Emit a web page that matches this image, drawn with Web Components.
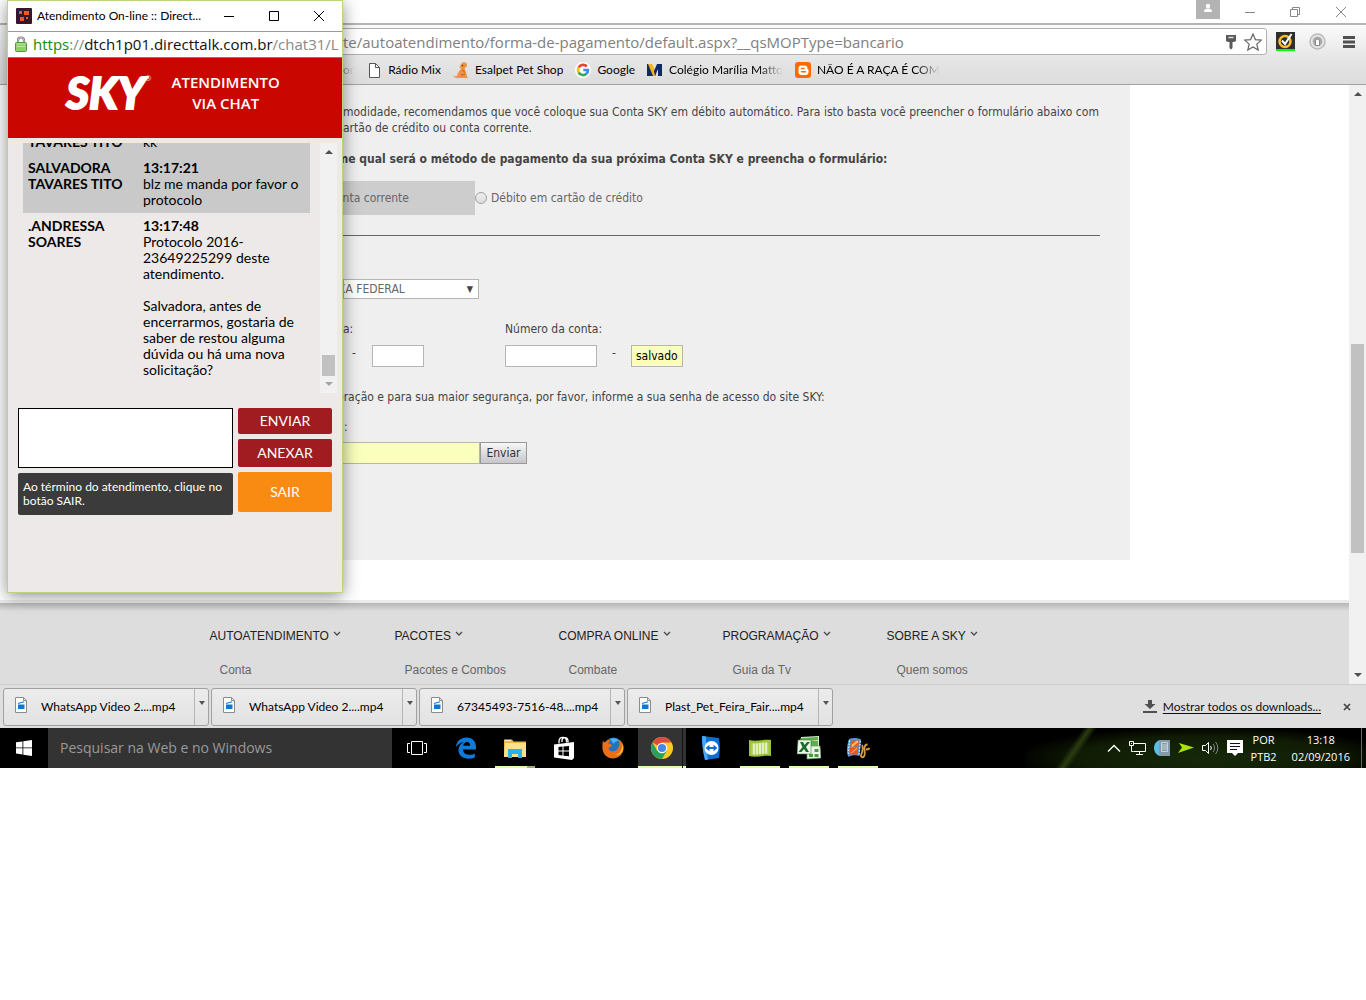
<!DOCTYPE html>
<html lang="pt-BR">
<head>
<meta charset="utf-8">
<title>Formas de pagamento</title>
<style>
    body {
        margin: 0;
        background: #fff;
        color: #000;
        font: 12px/16px Lato, sans-serif;
    }
</style>
</head>
<body>
<desktop-screen>
    <browser-window>
        <browser-toolbar slot="toolbar" url="te/autoatendimento/forma-de-pagamento/default.aspx?__qsMOPType=bancario"></browser-toolbar>
        <bookmark-bar slot="bookmarks">
            <bookmark-item fade>or</bookmark-item>
            <bookmark-item icon="page">Rádio Mix</bookmark-item>
            <bookmark-item icon="dog">Esalpet Pet Shop</bookmark-item>
            <bookmark-item icon="google">Google</bookmark-item>
            <bookmark-item icon="colegio" fade>Colégio Marília Matto</bookmark-item>
            <bookmark-item icon="blogger" fade>NÃO É A RAÇA É COM</bookmark-item>
        </bookmark-bar>
        <payment-form></payment-form>
        <site-footer>
            <footer-column heading="AUTOATENDIMENTO">Conta</footer-column>
            <footer-column heading="PACOTES">Pacotes e Combos</footer-column>
            <footer-column heading="COMPRA ONLINE">Combate</footer-column>
            <footer-column heading="PROGRAMAÇÃO">Guia da Tv</footer-column>
            <footer-column heading="SOBRE A SKY">Quem somos</footer-column>
        </site-footer>
        <download-shelf slot="shelf">
            <download-item>WhatsApp Video 2....mp4</download-item>
            <download-item>WhatsApp Video 2....mp4</download-item>
            <download-item>67345493-7516-48....mp4</download-item>
            <download-item>Plast_Pet_Feira_Fair....mp4</download-item>
        </download-shelf>
    </browser-window>
    <task-bar slot="taskbar"></task-bar>
    <chat-window slot="popup">
        <chat-message author="TAVARES TITO" class="client">kk</chat-message>
        <chat-message author="SALVADORA TAVARES TITO" time="13:17:21" class="client">blz me manda por favor o protocolo</chat-message>
        <chat-message author=".ANDRESSA SOARES" time="13:17:48">Protocolo 2016-23649225299 deste atendimento.<br><br>Salvadora, antes de encerrarmos, gostaria de saber de restou alguma dúvida ou há uma nova solicitação?</chat-message>
    </chat-window>
</desktop-screen>

<script>
// every icon is drawn here, name -> [viewBox, markup]
const icons = {
    page: ['0 0 16 16', '<path d="M3.500 1.500h6l4 4v10h-10z" fill="#fff" stroke="#555"/><path d="M9.500 1.500v4h4" fill="none" stroke="#555"/>'],
    dog: ['0 0 16 16', '<path d="M8.500 1.500c1.500-1.800 5-1.500 5.500 1 .3 2-1 3.300-2.500 3.500l1 3c1 2 .8 3.500 1.500 5.500l1 1.500H4.500c-2 0-3.500-.8-4.500-2.500 1.500.8 3 1 4.200.3C4.500 11 6 8.500 8.500 7 6.500 6.500 6.500 5 7 4z" fill="#ef9243"/><path d="M9 7.500l3 3M8 13l4-.5" stroke="#b65d1c" fill="none"/><circle cx="9.500" cy="3.500" r=".8" fill="#5b2d10"/>'],
    google: ['0 0 16 16', '<circle cx="8" cy="8" r="8" fill="#fff"/><g fill="none" stroke-width="2.600"><path d="M11.800 4.500A5 5 0 0 0 3.700 5.500" stroke="#ea4335"/><path d="M3.700 5.500a5 5 0 0 0 0 5" stroke="#fbbc05"/><path d="M3.700 10.500a5 5 0 0 0 7.700 1.300" stroke="#34a853"/><path d="M11.400 11.800A5 5 0 0 0 13 8H8.300" stroke="#4285f4"/></g>'],
    colegio: ['0 0 16 16', '<path d="M0 2h4l4 12H0z" fill="#0c2a66"/><path d="M1 2h4l4 8v4H6z" fill="#f5b324"/><path d="M10 2h5v12h-4V7L8 14 7 9z" fill="#0c2a66"/>'],
    blogger: ['0 0 16 16', '<rect width="16" height="16" rx="3" fill="#ff6a00"/><path d="M6.500 3.500h3a3 3 0 0 1 3 3c0 .8.200 1 1 1v2.500a3 3 0 0 1-3 3h-4a3 3 0 0 1-3-3v-3.500a3 3 0 0 1 3-3z" fill="#fff"/><path d="M6.500 6.500h2.500M6.500 9.800h4" stroke="#ff6a00" stroke-width="1.500" stroke-linecap="round"/>'],
    key: ['0 0 16 16', '<path d="M3 1h10v6l-2 1H9.500v6L8 15.500 6.500 14V8H5L3 7z" fill="#5a5a5a"/><path d="M5.500 3.500h5" stroke="#ddd" stroke-width="1.500"/>'],
    star: ['0 0 18 18', '<path d="M9 1l2.400 5.600 6 .5-4.600 4 1.400 5.900L9 13.900 3.800 17l1.400-5.900-4.600-4 6-.5z" fill="#fff" stroke="#666" stroke-width="1.200"/>'],
    norton: ['0 0 19 19', '<path fill="#2e2e2e" d="M0 0h19v19H0z"/><path fill="#0f0" d="M0 17h19v2H0z"/><circle cx="9" cy="9.500" r="5.500" fill="none" stroke="#fdbb30" stroke-width="2.500"/><path d="M6 8.500l3 3.500 6.500-10" fill="none" stroke="#fff" stroke-width="2"/>'],
    podcast: ['0 0 17 17', '<circle cx="8.500" cy="8.500" r="7.500" fill="#e5e5e5" stroke="#bbb" stroke-width="1.500"/><circle cx="8.500" cy="8.500" r="4.800" fill="#aaa"/><path d="M6.500 12.500V8a2 2 0 0 1 4 0v4.500z" fill="#fff" stroke="#888"/>'],
    menu: ['0 0 14 14', '<path d="M1 2.500h12M1 7h12M1 11.500h12" stroke="#505050" stroke-width="3"/>'],
    user: ['0 0 24 19', '<path fill="#b3b3b3" d="M0 0h24v19H0z"/><circle cx="12" cy="6" r="2.200" fill="#fff"/><path d="M8 12c0-2.500 1.500-3.500 4-3.500s4 1 4 3.500z" fill="#fff"/>'],
    minimize: ['0 0 12 12', '<path d="M1 6.500h10" stroke="currentColor"/>'],
    maximize: ['0 0 12 12', '<path d="M1.500 1.500h9v9h-9z" fill="none" stroke="currentColor"/>'],
    restore: ['0 0 12 12', '<path d="M1.500 3.500h7v7h-7zM3.500 3.500v-2h7v7h-2" fill="none" stroke="currentColor"/>'],
    close: ['0 0 12 12', '<path d="M1 1l10 10M11 1L1 11" stroke="currentColor" fill="none"/>'],
    cross: ['0 0 8 8', '<path d="M1 1l6 6M7 1L1 7" stroke="#444" stroke-width="1.700"/>'],
    chevron: ['0 0 8 6', '<path d="M1 1l3 3 3-3" fill="none" stroke="#4a4a4a" stroke-width="1.300"/>'],
    caret: ['0 0 8 4', '<path d="M1 0h6L4 4z" fill="#555"/>'],
    up: ['0 0 8 4', '<path d="M0 4h8L4 0z" fill="currentColor"/>'],
    down: ['0 0 8 4', '<path d="M0 0h8L4 4z" fill="currentColor"/>'],
    lock: ['0 0 12 16', '<path d="M3 7V4.500a3 3 0 0 1 6 0V7" fill="none" stroke="#777" stroke-width="2.200"/><path d="M3 7V4.500a3 3 0 0 1 6 0V7" fill="none" stroke="#ddd" stroke-width=".8"/><rect x=".5" y="6.500" width="11" height="9" rx="1" fill="#8ed16b" stroke="#57983c"/><path d="M1.500 8h9M1.500 10.500h9" stroke="#b5e69b"/>'],
    talk: ['0 0 16 16', '<rect width="16" height="16" rx="1" fill="#35182a"/><path d="M3 3h3v3H3zM8 3h5v4H8zM4 9h4v4H4zM10 9h2v2h-2z" fill="#ee5a24"/>'],
    video: ['0 0 12 16', '<path d="M.5.5h8l3 3v12H.5z" fill="#fff" stroke="#8c8c8c"/><path d="M8.500.5v3h3" fill="none" stroke="#8c8c8c"/><path d="M3 7.500h6.500V12H3zM2.800 6l6-1.700.3 1-6 1.700z" fill="#0a78d7"/>'],
    download: ['0 0 14 13', '<path d="M5 0h4v4h3.500L7 9 1.500 4H5z" fill="#505050"/><path d="M0 11h14v2H0z" fill="#505050"/>'],
    windows: ['0 0 16 16', '<path d="M0 2.300l6.500-.9v6.100H0zM7.300 1.300L16 0v7.500H7.300zM0 8.300h6.500v6.200L0 13.600zM7.300 8.300H16V16l-8.700-1.300z" fill="#fff"/>'],
    taskview: ['0 0 20 14', '<path d="M4.500.5h11v13h-11zM3 2.500H.5v9H3M17 2.500h2.500v9H17" fill="none" stroke="#fff"/>'],
    edge: ['0 0 22 22', '<path d="M1 10C1.500 4 6 .5 11.500.5c6 0 9.500 4 9.500 9.500v2.500H8c.2 4 3.500 5.300 6.800 5.300 2 0 3.800-.6 5-1.300V20.500c-1.800.8-3.600 1.200-5.800 1.200C8 21.700 3.500 18.500 3.500 13c0-3.500 2-6.500 5.500-8C6 5.300 3 7.300 1 10zm7.200-1.200h7c0-2-1-3.800-3.300-3.800C9.800 5 8.500 6.800 8.200 8.800z" fill="#0c7bd9"/>'],
    folder: ['0 0 22 20', '<path d="M0 1.500h8l1.500 2H22V19H0z" fill="#e9b544"/><path d="M1 5h21v14H0z" fill="#ffe08a"/><path d="M1 2.500h6" stroke="#fff3c2" stroke-width="1.200"/><path d="M4 20v-9h14v9h-4v-4H8v4z" fill="#29b3ea"/>'],
    store: ['0 0 22 24', '<path d="M6 7.500V5c.5-4.500 7-5 7.500 0v1.500M9 6V4c1-3.500 5.500-3 6 .5v2" fill="none" stroke="#fff" stroke-width="1.300"/><path d="M1 8.500L21 6v16L19 24 1 21.500z" fill="#fff"/><path d="M5.500 11l4-.4v4h-4zM10.500 10.500l5.500-.6v4.700h-5.500zM5.500 15.500h4v4l-4-.4zM10.500 15.500H16v4.700l-5.500-.5z" fill="#000"/>'],
    firefox: ['0 0 22 22', '<circle cx="11.500" cy="10" r="9.500" fill="#2274bd"/><path d="M8 2c4-2 8 0 9 2-3-.5-5 1-5 3" fill="#58aee6"/><path d="M1 4l2 1.500C4.500 3.500 6 3 8 3L6.500 6.500 10 8c-.5 2-3 2-3.500 3.500 1 3 5 4 8 1.500 2.500-2 3.500-5 2.500-8.500L16 3c4 1 6 4 5.500 9-.8 6-5.500 9.500-10.500 9.500-6 0-10-4.500-10.500-9.500C.3 9 .3 6 1 4z" fill="#e8701a"/><path d="M20.500 7c.3 6-3 10-7.500 11 3 .5 6-1 7.500-4 1-2.500 1-5 0-7z" fill="#ffc83d"/>'],
    chrome: ['0 0 22 22', '<circle cx="11" cy="11" r="11" fill="#fbc926"/><path d="M11 11L1.500 5.500A11 11 0 0 1 20.500 5.500H11z" fill="#dd4b3e"/><path d="M1.500 5.500A11 11 0 0 0 11 22l4.800-8.300L11 11 6.200 13.700z" fill="#2aa15b"/><circle cx="11" cy="11" r="5.200" fill="#fff"/><circle cx="11" cy="11" r="4.100" fill="#4a86e8"/>'],
    teamviewer: ['0 0 20 24', '<path d="M1 0l17 2c1 7 1 14 0 20L4 24C2 16 1 8 1 0z" fill="#0d6ed6"/><path d="M1 0l4 .5C5 9 6 17 7 23.500L4 24C2 16 1 8 1 0z" fill="#4fa6f2"/><circle cx="10.500" cy="12" r="7" fill="#fff"/><path d="M4.500 12l4-3.200V11h4V8.800l4 3.200-4 3.200V13h-4v2.200z" fill="#0d6ed6"/>'],
    barcode: ['0 0 22 20', '<path d="M0 2c7 2 15-1 22 0v16c-7-1-15 2-22 0z" fill="#9cc33b"/><path d="M2.500 5c6 1 11-1 17-.5v11.500c-6-.5-11 1.500-17 .5z" fill="#b9d66c"/><path d="M5 5.500v11M8 5.500v11M11 5v11M14 4.700v11M17 4.500v11" stroke="#f2f8dc" stroke-width="1.500"/>'],
    excel: ['0 0 24 24', '<path d="M4 1l18-1v14H2z" fill="#d9efd0"/><path d="M4 2l17-1v3L3 6zM14 5h7v8h-7z" fill="#5fae4e"/><path d="M10 10h13l1 12-14 1z" fill="#edf6ea" stroke="#6b9a62" stroke-width=".7"/><path d="M12 18h4v3h-4zM17.500 18h4v3h-4zM17.500 13h4v3h-4z" fill="#4d9a43"/><path d="M1 4h13v14H0z" fill="#eef7ec" stroke="#388037" stroke-width=".6"/><path d="M3 6h3l1.600 3L10 6h3L9 11l3 5H9l-2-3-2.500 3h-3L5.500 11z" fill="#1e6b27"/>'],
    film: ['0 0 24 22', '<path d="M3 2c4-1.500 9-1 12 .5l-1.500 16.500c-3-1-8-1-11 1C0 14 1 8 3 2z" fill="#4a9bd8"/><path d="M5.500 3.500h7.500l-.6 6H4zM3.700 11h8.500l-.6 6.500H4.200z" fill="#e8581c"/><path d="M6 8l5-4 1 1-6 4.500zM5 16l6-4.500" stroke="#ffc27a" fill="#ffa04d"/><path d="M3.500 3.500L2 18.500M14.300 4L13 18" stroke="#e3f1fb" stroke-width="1.300" stroke-dasharray="1.500 1.500"/><path d="M21.500 7.500c-2 0-3 1.500-3 4 0 4 1 6-.5 8-1.500 1.500-3.500.5-3-1.500M16 8c1.500 3 0 8-1 10.500M20 12.500c2 0 3-.5 3.500-1.500" fill="none" stroke="#d99a45" stroke-width="1.800"/>'],
    trayup: ['0 0 14 8', '<path d="M1 7.500l6-6 6 6" fill="none" stroke="#fff" stroke-width="1.400"/>'],
    monitor: ['0 0 17 15', '<path d="M4.500 2.500h12v8h-12M10.500 10.500v3M7 13.500h7M.5.500h4v4h-4zM2.500 4.500v6h2" fill="none" stroke="#fff"/><path d="M2 2h1v1H2z" fill="#fff"/>'],
    server: ['0 0 16 16', '<path d="M6 0v16C-2 14-2 2 6 0z" fill="#57bfe8"/><path d="M5 0h11v16H5z" fill="#8699a6"/><path d="M7.500 2.500h6v9h-6zM8 5h5M8 7h5M8 9h5" fill="none" stroke="#c7d3da"/>'],
    arrow: ['0 0 16 10', '<path d="M1 0l15 4.500L0 10l4-5.500z" fill="#a6e30a"/>'],
    speaker: ['0 0 17 14', '<path d="M.5 4.500h3l3-3v11l-3-3h-3z" fill="none" stroke="#fff"/><path d="M8.500 5a3 3 0 0 1 0 4" fill="none" stroke="#fff"/><path d="M11 3a6 6 0 0 1 0 8M13.500 1a9 9 0 0 1 0 12" fill="none" stroke="#888"/>'],
    note: ['0 0 16 16', '<path d="M0 0h16v13h-5l-3 3-3-3H0z" fill="#fff"/><path d="M3 3.500h10M3 6.500h10M3 9.500h7" stroke="#10180a"/>']
};

class UiIcon extends HTMLElement {
    constructor() {
        super();
        this.attachShadow({ mode: "open" });
    }

    connectedCallback() {
        const [box, markup] = icons[this.getAttribute("name")];
        const [, , w, h] = box.split(" ");
        this.shadowRoot.innerHTML = /*html*/`
            <style>
                :host { display: inline-flex; flex: none; }
                svg { display: block; }
            </style>
            <svg width="${w}" height="${h}" viewBox="${box}" aria-hidden="true">${markup}</svg>
        `;
    }
}
customElements.define("ui-icon", UiIcon);

// small helper: a custom element that only needs a fixed template
function define(name, html) {
    const $template = document.createElement("template");
    $template.innerHTML = html;
    customElements.define(name, class extends HTMLElement {
        constructor() {
            super();
            this.attachShadow({ mode: "open" });
            this.shadowRoot.appendChild($template.content.cloneNode(true));
        }
        connectedCallback() {
            // [data-attr] nodes show the host's attribute of that name
            this.shadowRoot.querySelectorAll("[data-attr]").forEach(node => {
                const value = this.getAttribute(node.dataset.attr);
                if (value === null) node.remove();
                else node.textContent = value;
            });
        }
    });
}

define("desktop-screen", /*html*/`
    <style>
        :host { display: block; position: relative; }
    </style>
    <slot></slot>
    <slot name="taskbar"></slot>
    <slot name="popup"></slot>
`);

define("scroll-rail", /*html*/`
    <style>
        :host {
            display: flex;
            flex-direction: column;
            align-items: center;
            justify-content: space-between;
            box-sizing: border-box;
            width: 17px;
            padding: 7px 0;
            background: #f1f1f1;
            color: #505050;
        }
        .track {
            flex: 1;
            display: flex;
            flex-direction: column;
            width: 13px;
            margin: 6px 0;
        }
        .track::before { content: ""; flex: var(--before, 1); }
        .track::after { content: ""; flex: var(--after, 1); }
        .thumb { flex: var(--thumb, 1); background: #c1c1c1; }
        .end { color: var(--end, #505050); }
    </style>
    <ui-icon name="up"></ui-icon>
    <div class="track"><div class="thumb"></div></div>
    <ui-icon class="end" name="down"></ui-icon>
`);

define("browser-window", /*html*/`
    <style>
        :host { display: block; background: #fff; }
        .viewport { display: flex; border-top: 1px solid #a3a3a3; }
        .page { flex: 1; min-width: 0; overflow: hidden; }
        scroll-rail { --before: 241; --thumb: 208; --after: 114; }
    </style>
    <slot name="toolbar"></slot>
    <slot name="bookmarks"></slot>
    <div class="viewport">
        <div class="page"><slot></slot></div>
        <scroll-rail></scroll-rail>
    </div>
    <slot name="shelf"></slot>
`);

define("browser-toolbar", /*html*/`
    <style>
        :host { display: block; }
        .caption {
            display: flex;
            justify-content: flex-end;
            align-items: flex-start;
            height: 23px;
            padding-right: 19px;
            color: #888;
        }
        .caption button { height: 23px; padding: 0; border: 0; background: none; color: inherit; }
        .caption button:first-child { height: 19px; margin-right: 24px; }
        .caption button:not(:first-child) { width: 12px; padding-top: 4px; }
        .caption .gap { margin: 0 34px 0 33px; }
        .bar {
            display: flex;
            align-items: center;
            height: 27px;
            padding: 3px 10px 3px 110px;
            border-top: 2px solid #b5b5b5;
            background: linear-gradient(#fbfbfb, #e6e6e6);
        }
        .omnibox {
            flex: 1;
            display: flex;
            align-items: center;
            box-sizing: border-box;
            height: 27px;
            padding: 0 4px 0 232px;
            border: 1px solid #b0b0b0;
            border-radius: 3px;
            background: #fff;
        }
        input {
            flex: 1;
            min-width: 0;
            padding: 0;
            border: 0;
            outline: none;
            background: none;
            color: #808080;
            font: 15px/20px "Open Sans", sans-serif;
        }
        .omnibox button, .ext button { display: flex; padding: 0; border: 0; background: none; }
        .omnibox button { margin-left: 5px; }
        .ext { display: flex; align-items: center; gap: 14px; margin-left: 9px; }
        .ext button:last-child { margin-left: 2px; }
    </style>
    <div class="caption">
        <button aria-label="Perfil"><ui-icon name="user"></ui-icon></button>
        <button aria-label="Minimizar"><ui-icon name="minimize"></ui-icon></button>
        <button class="gap" aria-label="Restaurar"><ui-icon name="restore"></ui-icon></button>
        <button aria-label="Fechar"><ui-icon name="close"></ui-icon></button>
    </div>
    <div class="bar">
        <div class="omnibox">
            <input type="text" aria-label="Endereço">
            <button aria-label="Senhas"><ui-icon name="key"></ui-icon></button>
            <button aria-label="Favoritos"><ui-icon name="star"></ui-icon></button>
        </div>
        <div class="ext">
            <button aria-label="Norton"><ui-icon name="norton"></ui-icon></button>
            <button aria-label="Podcast"><ui-icon name="podcast"></ui-icon></button>
            <button aria-label="Menu"><ui-icon name="menu"></ui-icon></button>
        </div>
    </div>
`);
document.querySelectorAll("browser-toolbar").forEach($bar => {
    $bar.shadowRoot.querySelector("input").value = $bar.getAttribute("url");
});

define("bookmark-bar", /*html*/`
    <style>
        :host {
            display: flex;
            align-items: center;
            gap: 12px;
            height: 24px;
            padding: 0 0 2px 343px;
            background: linear-gradient(#e6e6e6, #dcdcdc);
        }
    </style>
    <slot></slot>
`);

define("bookmark-item", /*html*/`
    <style>
        :host { display: block; overflow: hidden; }
        :host([fade]) { mask: linear-gradient(to left, transparent, #000 24px); }
        a { display: flex; align-items: center; gap: 6px; color: #000; text-decoration: none; white-space: nowrap; }
    </style>
    <a href="#"><slot></slot></a>
`);
document.querySelectorAll("bookmark-item[icon]").forEach($item => {
    const $icon = document.createElement("ui-icon");
    $icon.setAttribute("name", $item.getAttribute("icon"));
    $item.shadowRoot.querySelector("a").prepend($icon);
});

define("payment-form", /*html*/`
    <style>
        :host { display: block; padding-bottom: 40px; background: #fff; }
        form {
            box-sizing: border-box;
            max-width: 911px;
            margin: 0 auto;
            padding: 19px 30px 96px 124px;
            background: #efefef;
            color: #444;
            font: 12px/16px "DejaVu Sans Condensed", Tahoma, sans-serif;
        }
        p { margin: 0 0 14px; white-space: nowrap; }
        .lead { margin-bottom: 15px; }
        /* these lines begin a little way under the chat window */
        .under { text-indent: -6px; }
        .method { display: flex; align-items: center; color: #666; }
        .method label { display: flex; align-items: center; gap: 4px; }
        .method .on {
            justify-content: flex-end;
            box-sizing: border-box;
            width: 215px;
            height: 34px;
            margin-left: -83px;
            padding-right: 66px;
            background: #cdcdcd;
        }
        input[type=radio] {
            appearance: none;
            width: 12px;
            height: 12px;
            margin: 0;
            border: 1px solid #a0a0a0;
            border-radius: 50%;
            background: linear-gradient(#eee, #ddd);
        }
        hr { margin: 20px 0 43px -94px; border: 0; border-top: 1px solid #666; }
        select, .text {
            box-sizing: border-box;
            margin: 0;
            border: 1px solid #b5b5b5;
            border-radius: 0;
            background: #fff;
            color: #666;
            font: inherit;
        }
        .bank { display: inline-grid; align-items: center; margin-bottom: 22px; }
        .bank > * { grid-area: 1 / 1; }
        select { width: 136px; height: 20px; padding: 0; appearance: none; }
        .bank span { justify-self: end; margin-right: 6px; font-size: 9px; text-indent: 0; pointer-events: none; }
        .account { display: flex; margin-bottom: 22px; }
        .account label { display: block; margin-bottom: 8px; }
        .account .first { width: 162px; }
        .pair { display: flex; }
        .pair span { margin: 0 15px; }
        .text { height: 22px; padding: 0 4px; }
        .digit { width: 52px; }
        .number { width: 92px; }
        .filled { background: #faffbd; color: #000; }
        .pair .first-dash { margin: 0 16px 0 9px; }
        .secret { display: block; margin: 0 0 7px 1px; }
        .send { display: flex; margin-left: -102px; }
        .password { width: 239px; }
        .send button {
            box-sizing: border-box;
            width: 47px;
            height: 22px;
            padding: 0;
            border: 1px solid #999;
            background: linear-gradient(#f7f7f7, #c6c6cb);
            color: #333;
            font: inherit;
        }
    </style>
    <form>
        <p class="lead">modidade, recomendamos que você coloque sua Conta SKY em débito automático. Para isto basta você preencher o formulário abaixo com<br>artão de crédito ou conta corrente.</p>
        <p class="under"><b>me qual será o método de pagamento da sua próxima Conta SKY e preencha o formulário:</b></p>
        <div class="method">
            <label class="on"><input type="radio" name="method">nta corrente</label>
            <label><input type="radio" name="method">Débito em cartão de crédito</label>
        </div>
        <hr>
        <div class="bank">
            <select class="under" aria-label="Banco"><option>XA FEDERAL</option></select>
            <span>▼</span>
        </div>
        <div class="account">
            <div class="first">
                <label for="agency">a:</label>
                <div class="pair">
                    <span class="first-dash">-</span>
                    <input class="text digit" id="agency" type="text">
                </div>
            </div>
            <div>
                <label for="number">Número da conta:</label>
                <div class="pair">
                    <input class="text number" id="number" type="text">
                    <span>-</span>
                    <input class="text digit filled" type="text" value="salvado" aria-label="Dígito da conta">
                </div>
            </div>
        </div>
        <p class="under">eração e para sua maior segurança, por favor, informe a sua senha de acesso do site SKY:</p>
        <label class="secret" for="password">:</label>
        <div class="send">
            <input class="text filled password" id="password" type="password">
            <button type="button">Enviar</button>
        </div>
    </form>
`);

define("site-footer", /*html*/`
    <style>
        :host {
            display: block;
            height: 81px;
            border-top: 3px solid #ebebeb;
            background: linear-gradient(#b5b5b5, #ddd 8px);
        }
        nav {
            display: grid;
            grid-template-columns: 185px repeat(4, 164px);
            max-width: 930px;
            margin: 0 auto;
            padding-top: 25px;
        }
    </style>
    <nav><slot></slot></nav>
`);

define("footer-column", /*html*/`
    <style>
        :host { display: block; font: 12px/16px "Liberation Sans", Arial, sans-serif; white-space: nowrap; }
        a { display: block; text-decoration: none; }
        .head { display: flex; align-items: center; gap: 4px; margin-bottom: 18px; color: #222; }
        .head ui-icon { margin-bottom: 4px; }
        .sub { padding-left: 10px; color: #666; }
    </style>
    <a class="head" href="#"><span data-attr="heading"></span><ui-icon name="chevron"></ui-icon></a>
    <a class="sub" href="#"><slot></slot></a>
`);

define("download-shelf", /*html*/`
    <style>
        :host {
            display: flex;
            align-items: center;
            gap: 2px;
            box-sizing: border-box;
            height: 44px;
            padding: 0 15px 0 3px;
            border-top: 1px solid #ccc;
            background: #dfdfdf;
        }
        .all { display: flex; align-items: center; gap: 6px; margin-left: auto; color: #111; text-underline-offset: 2px; }
        button { display: flex; margin-left: 20px; padding: 0; border: 0; background: none; }
    </style>
    <slot></slot>
    <a class="all" href="#"><ui-icon name="download"></ui-icon>Mostrar todos os downloads...</a>
    <button aria-label="Fechar"><ui-icon name="cross"></ui-icon></button>
`);

define("download-item", /*html*/`
    <style>
        :host {
            display: flex;
            box-sizing: border-box;
            width: 206px;
            height: 38px;
            border: 1px solid #a0a0a0;
            border-radius: 3px;
            background: linear-gradient(#ececec, #e2e2e2);
        }
        button { display: flex; padding: 0; border: 0; background: none; font: inherit; color: inherit; }
        .file { flex: 1; align-items: center; gap: 14px; padding-left: 11px; white-space: nowrap; }
        .file ui-icon { margin-bottom: 4px; }
        .more { width: 14px; justify-content: center; padding-top: 12px; border-left: 1px solid #b5b5b5; }
    </style>
    <button class="file"><ui-icon name="video"></ui-icon><slot></slot></button>
    <button class="more" aria-label="Opções"><ui-icon name="caret"></ui-icon></button>
`);

define("task-button", /*html*/`
    <style>
        :host { display: block; }
        button {
            display: flex;
            align-items: center;
            justify-content: center;
            width: 48px;
            height: 40px;
            padding: 0;
            border: 0;
            background: none;
        }
        :host([open]) button { background: linear-gradient(#e2fba6, #e2fba6) 4px 38px / 40px 2px no-repeat; }
        :host([group]) button {
            background:
                linear-gradient(#9db073, #9db073) 36px 38px / 8px 2px no-repeat,
                linear-gradient(#e2fba6, #e2fba6) 4px 38px / 40px 2px no-repeat;
        }
        :host([active]) button {
            background:
                linear-gradient(#111, #111) 44px 0 / 1px 40px no-repeat,
                linear-gradient(#e2fba6, #e2fba6) 0 38px / 48px 2px no-repeat,
                #333;
        }
    </style>
    <button><slot></slot></button>
`);

define("task-bar", /*html*/`
    <style>
        :host {
            display: flex;
            height: 40px;
            color: #fff;
            background:
                linear-gradient(125deg, transparent 40%, #2c3b10 46%, transparent 52%) right 240px top / 90px 40px no-repeat,
                radial-gradient(ellipse at center, #16290a, #101c04 50%, transparent 75%) right -20px top / 360px 60px no-repeat,
                #000;
        }
        .search {
            box-sizing: border-box;
            width: 344px;
            padding: 0 12px;
            border: 0;
            background: #333;
            color: #fff;
            font: 14px/20px "Open Sans", sans-serif;
        }
        .search::placeholder { color: #999; opacity: 1; }
        .apps { display: flex; gap: 1px; margin-left: 1px; }
        .tray {
            display: flex;
            align-items: center;
            gap: 8px;
            margin-left: auto;
            font: 11px/17px "Open Sans", sans-serif;
            text-align: center;
        }
        .lang { margin: 0 7px 0 0; }
        .clock { padding-right: 11px; }
        .edge { box-sizing: border-box; width: 5px; height: 40px; margin-left: -8px; border-left: 1px solid #666; }
    </style>
    <task-button><ui-icon name="windows"></ui-icon></task-button>
    <input class="search" type="search" placeholder="Pesquisar na Web e no Windows" aria-label="Pesquisar">
    <div class="apps">
        <task-button><ui-icon name="taskview"></ui-icon></task-button>
        <task-button><ui-icon name="edge"></ui-icon></task-button>
        <task-button group><ui-icon name="folder"></ui-icon></task-button>
        <task-button><ui-icon name="store"></ui-icon></task-button>
        <task-button><ui-icon name="firefox"></ui-icon></task-button>
        <task-button active><ui-icon name="chrome"></ui-icon></task-button>
        <task-button><ui-icon name="teamviewer"></ui-icon></task-button>
        <task-button open><ui-icon name="barcode"></ui-icon></task-button>
        <task-button open><ui-icon name="excel"></ui-icon></task-button>
        <task-button open><ui-icon name="film"></ui-icon></task-button>
    </div>
    <div class="tray">
        <ui-icon name="trayup"></ui-icon>
        <ui-icon name="monitor"></ui-icon>
        <ui-icon name="server"></ui-icon>
        <ui-icon name="arrow"></ui-icon>
        <ui-icon name="speaker"></ui-icon>
        <ui-icon name="note"></ui-icon>
        <div class="lang">POR<br>PTB2</div>
        <div class="clock">13:18<br>02/09/2016</div>
        <div class="edge"></div>
    </div>
`);

define("chat-message", /*html*/`
    <style>
        :host {
            display: grid;
            grid-template-columns: 105px 1fr;
            column-gap: 10px;
            padding: 5px;
            font: 14px/16px Lato, sans-serif;
        }
        :host(.client) { background: #c9c9c9; }
        b, time { font-weight: 700; }
        time { display: block; }
    </style>
    <b data-attr="author"></b>
    <div><time data-attr="time"></time><slot></slot></div>
`);

define("chat-window", /*html*/`
    <style>
        /* floats over the browser window */
        :host {
            position: absolute;
            top: 0;
            left: 7px;
            box-sizing: border-box;
            width: 336px;
            height: 593px;
            border: 1px solid #b9d57e;
            background: #ede9e8;
            box-shadow: 0 3px 16px rgba(0, 0, 0, .45);
        }
        button { padding: 0; border: 0; background: none; color: inherit; }
        .title {
            display: flex;
            align-items: center;
            gap: 5px;
            height: 30px;
            padding: 0 17px 0 8px;
            border-bottom: 1px solid #999;
            background: #fff;
        }
        .title span { flex: 1; white-space: nowrap; }
        .title button { display: flex; }
        .title button + button { margin-left: 28px; }
        .address {
            display: flex;
            align-items: center;
            gap: 6px;
            height: 23px;
            padding: 0 3px 2px 7px;
            border-bottom: 1px solid #a66;
            background: #fff;
            color: #888;
            font: 15px/20px "Open Sans", sans-serif;
            white-space: nowrap;
        }
        .address i { font-style: normal; color: #0a8f08; }
        .address em { font-style: normal; color: #111; }
        header {
            display: flex;
            gap: 20px;
            justify-content: center;
            box-sizing: border-box;
            height: 80px;
            padding: 12px 4px 0 0;
            background: #c90700;
            color: #fff;
        }
        .logo { display: flex; font: italic 900 44px/44px Lato, sans-serif; -webkit-text-stroke: 2px #fff; }
        .logo sup { font: 8px/16px Lato, sans-serif; -webkit-text-stroke: 0; }
        h1 { margin: 2px 0 0; font: 600 15px/21px "Open Sans", sans-serif; text-align: center; }
        .log { display: flex; height: 250px; margin: 5px 5px 0 15px; gap: 10px; overflow: hidden; }
        .messages { flex: 1; margin-top: -14px; }
        scroll-rail { --before: 196; --thumb: 21; --after: 0; --end: #a3a3a3; }
        .reply {
            display: grid;
            grid-template-columns: 1fr 94px;
            gap: 5px;
            padding: 15px 10px;
        }
        .column { display: flex; flex-direction: column; gap: 5px; }
        textarea {
            box-sizing: border-box;
            height: 60px;
            margin: 0;
            border: 1px solid #000;
            border-radius: 0;
            background: #fff;
            resize: none;
        }
        .hint { padding: 7px 5px; border-radius: 2px; background: #3b3b3b; color: #fff; font: 12px/14px Lato, sans-serif; }
        .action { height: 26px; border-radius: 2px; background: #a01c20; color: #fff; font: 14px/16px Lato, sans-serif; }
        .attach { height: 28px; }
        .exit { height: 40px; background: #f98b12; }
    </style>
    <div class="title">
        <ui-icon name="talk"></ui-icon>
        <span>Atendimento On-line :: Direct...</span>
        <button aria-label="Minimizar"><ui-icon name="minimize"></ui-icon></button>
        <button aria-label="Maximizar"><ui-icon name="maximize"></ui-icon></button>
        <button aria-label="Fechar"><ui-icon name="close"></ui-icon></button>
    </div>
    <div class="address"><ui-icon name="lock"></ui-icon><span><i>https</i>://<em>dtch1p01.directtalk.com.br</em>/chat31/L</span></div>
    <header>
        <div class="logo">SKY<sup>®</sup></div>
        <h1>ATENDIMENTO<br>VIA CHAT</h1>
    </header>
    <div class="log">
        <div class="messages"><slot></slot></div>
        <scroll-rail></scroll-rail>
    </div>
    <div class="reply">
        <div class="column">
            <textarea aria-label="Mensagem"></textarea>
            <div class="hint">Ao término do atendimento, clique no botão SAIR.</div>
        </div>
        <div class="column">
            <button class="action">ENVIAR</button>
            <button class="action attach">ANEXAR</button>
            <button class="action exit">SAIR</button>
        </div>
    </div>
`);
</script>
</body>
</html>
